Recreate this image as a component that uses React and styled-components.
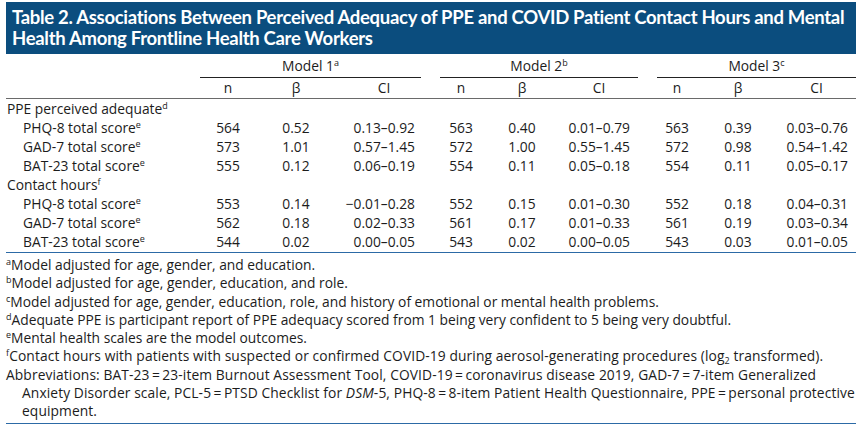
import React from 'react';
import styled, { createGlobalStyle } from 'styled-components';

const GlobalStyle = createGlobalStyle`
  html, body {
    margin: 0;
    padding: 0;
    background: #ffffff;
  }
  body {
    font-family: "Open Sans", "Liberation Sans", sans-serif;
    color: #1c1c1c;
  }
`;

const COLS = '194px 56px 80px 85px 19px 42px 80px 76px 19px 40px 82px 77px';

const Page = styled.div`
  width: 850px;
  padding: 2px 7px 0 6px;
`;

const TitleBar = styled.div`
  background: #0b4d7e;
  color: #ffffff;
  font-family: Lato, "Open Sans", sans-serif;
  font-weight: 700;
  font-size: 18.5px;
  letter-spacing: -0.3px;
  line-height: 21px;
  padding: 5px 6px 5px 6px;
  white-space: nowrap;
  overflow: hidden;
`;

const HeadGrid = styled.div`
  display: grid;
  grid-template-columns: ${COLS};
  font-size: 13.8px;
  border-bottom: 1.5px solid #6a6a6a;
`;

const ModelHead = styled.div`
  grid-column: ${p => p.$col} / span 3;
  text-align: center;
  height: 22px;
  line-height: 21px;
  padding-top: 1px;
  border-bottom: 1px solid #222;
`;

const ColHead = styled.div`
  text-align: center;
  height: 20px;
  line-height: 20px;
  padding-left: ${p => p.$pl || 0}px;
  padding-right: ${p => p.$pr || 0}px;
`;

const BodyGrid = styled.div`
  display: grid;
  grid-template-columns: ${COLS};
  grid-auto-rows: 19px;
  font-size: 13.8px;
  line-height: 19px;
  border-bottom: 1.5px solid #2c6aa6;
  padding-bottom: 1px;
`;

const Label = styled.div`
  padding-left: ${p => (p.$group ? 1 : 17)}px;
  white-space: nowrap;
  grid-column: ${p => (p.$group ? '1 / span 12' : 'auto')};
`;

const Num = styled.div`
  text-align: center;
`;

const Range = styled.div`
  text-align: right;
  padding-right: ${p => p.$pr}px;
  white-space: nowrap;
`;

const Spacer = styled.div``;

const Sup = styled.sup`
  font-size: 9px;
  line-height: 0;
  vertical-align: 5px;
`;

const Notes = styled.div`
  font-size: 13.8px;
  line-height: 18.3px;
  padding-top: 3px;
  border-bottom: 1.5px solid #2c6aa6;
  padding-bottom: 2px;
`;

const Note = styled.div`
  padding-left: ${p => (p.$hang ? 16 : 0)}px;
  text-indent: ${p => (p.$hang ? -16 : 0)}px;
  white-space: nowrap;
  letter-spacing: ${p => (p.$wide ? 0.1 : 0)}px;
`;

const NoteMark = styled.sup`
  font-size: 9px;
  line-height: 0;
  vertical-align: 5px;
`;

const Sub = styled.sub`
  font-size: 9px;
  line-height: 0;
  vertical-align: -3px;
`;

const models = [
  { name: 'Model 1', mark: 'a', col: 2, ciPl: 17, ciPr: 6 },
  { name: 'Model 2', mark: 'b', col: 6, ciPl: 6, ciPr: 8 },
  { name: 'Model 3', mark: 'c', col: 10, ciPl: 6, ciPr: 8 },
];

const groups = [
  {
    label: 'PPE perceived adequate',
    mark: 'd',
    rows: [
      ['PHQ-8 total score', ['564', '0.52', '0.13–0.92'], ['563', '0.40', '0.01–0.79'], ['563', '0.39', '0.03–0.76']],
      ['GAD-7 total score', ['573', '1.01', '0.57–1.45'], ['572', '1.00', '0.55–1.45'], ['572', '0.98', '0.54–1.42']],
      ['BAT-23 total score', ['555', '0.12', '0.06–0.19'], ['554', '0.11', '0.05–0.18'], ['554', '0.11', '0.05–0.17']],
    ],
  },
  {
    label: 'Contact hours',
    mark: 'f',
    rows: [
      ['PHQ-8 total score', ['553', '0.14', '−0.01–0.28'], ['552', '0.15', '0.01–0.30'], ['552', '0.18', '0.04–0.31']],
      ['GAD-7 total score', ['562', '0.18', '0.02–0.33'], ['561', '0.17', '0.01–0.33'], ['561', '0.19', '0.03–0.34']],
      ['BAT-23 total score', ['544', '0.02', '0.00–0.05'], ['543', '0.02', '0.00–0.05'], ['543', '0.03', '0.01–0.05']],
    ],
  },
];

const notes = [
  ['a', 'Model adjusted for age, gender, and education.'],
  ['b', 'Model adjusted for age, gender, education, and role.'],
  ['c', 'Model adjusted for age, gender, education, role, and history of emotional or mental health problems.'],
  ['d', 'Adequate PPE is participant report of PPE adequacy scored from 1 being very confident to 5 being very doubtful.'],
  ['e', 'Mental health scales are the model outcomes.'],
];

function DataRow({ label, values }) {
  return (
    <>
      <Label>
        {label}
        <Sup>e</Sup>
      </Label>
      {values.map((v, i) => (
        <React.Fragment key={i}>
          {i > 0 && <Spacer />}
          <Num>{v[0]}</Num>
          <Num>{v[1]}</Num>
          <Range $pr={models[i].ciPr}>{v[2]}</Range>
        </React.Fragment>
      ))}
    </>
  );
}

export default function App() {
  return (
    <Page>
      <GlobalStyle />
      <TitleBar>
        Table 2. Associations Between Perceived Adequacy of PPE and COVID Patient Contact Hours and Mental
        <br />
        Health Among Frontline Health Care Workers
      </TitleBar>

      <HeadGrid>
        {models.map(m => (
          <ModelHead key={m.name} $col={m.col}>
            {m.name}
            <Sup>{m.mark}</Sup>
          </ModelHead>
        ))}
        <Spacer />
        {models.map((m, i) => (
          <React.Fragment key={m.name}>
            {i > 0 && <Spacer />}
            <ColHead>n</ColHead>
            <ColHead>β</ColHead>
            <ColHead $pl={m.ciPl} $pr={m.ciPr}>CI</ColHead>
          </React.Fragment>
        ))}
      </HeadGrid>

      <BodyGrid>
        {groups.map(g => (
          <React.Fragment key={g.label}>
            <Label $group>
              {g.label}
              <Sup>{g.mark}</Sup>
            </Label>
            {g.rows.map(r => (
              <DataRow key={r[0]} label={r[0]} values={r.slice(1)} />
            ))}
          </React.Fragment>
        ))}
      </BodyGrid>

      <Notes>
        {notes.map(([mark, text]) => (
          <Note key={mark}>
            <NoteMark>{mark}</NoteMark>
            {text}
          </Note>
        ))}
        <Note $wide>
          <NoteMark>f</NoteMark>
          Contact hours with patients with suspected or confirmed COVID-19 during aerosol-generating procedures (log
          <Sub>2</Sub> transformed).
        </Note>
        <Note $hang $wide>
          Abbreviations: BAT-23&#8201;=&#8201;23-item Burnout Assessment Tool, COVID-19&#8201;=&#8201;coronavirus disease 2019, GAD-7&#8201;=&#8201;7-item Generalized
          <br />
          Anxiety Disorder scale, PCL-5&#8201;=&#8201;PTSD Checklist for <i>DSM</i>-5, PHQ-8&#8201;=&#8201;8-item Patient Health Questionnaire, PPE&#8201;=&#8201;personal protective
          <br />
          equipment.
        </Note>
      </Notes>
    </Page>
  );
}
